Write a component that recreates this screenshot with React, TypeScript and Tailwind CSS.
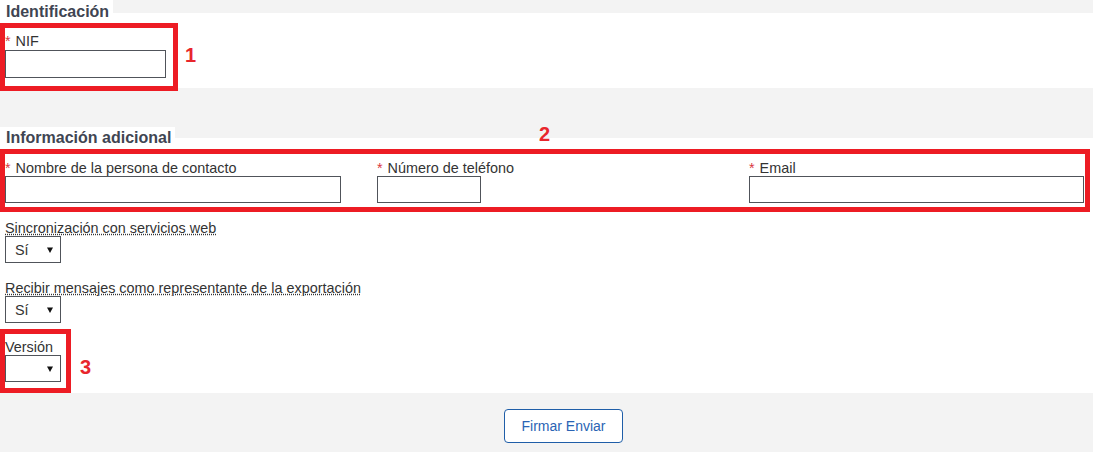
import React from 'react';

const Req: React.FC<{ text: string }> = ({ text }) => (
  <div className="leading-[16px]">
    <span className="text-[#d9363e] pr-[1px]">*</span> {text}
  </div>
);

const FakeSelect: React.FC<{ value?: string }> = ({ value }) => (
  <div className="flex items-center justify-between w-[56px] h-[27px] border border-[#50545a] bg-white pl-[9px] pr-[7px]">
    <span className="leading-[16px]">{value ?? ''}</span>
    <svg width="6" height="6" viewBox="0 0 6 6">
      <path d="M0 0.5 L6 0.5 L3 6 Z" fill="#111" />
    </svg>
  </div>
);

const Marker: React.FC<{ n: string; className: string }> = ({ n, className }) => (
  <div className={`absolute text-[20px] leading-[20px] font-bold text-[#e8262c] ${className}`}>{n}</div>
);

export default function App() {
  return (
    <div className="w-full h-[452px] bg-[#f3f3f3] font-['Liberation_Sans',Arial,sans-serif] text-[14.4px] text-[#333]">
      {/* Identificación */}
      <div className="relative">
        <div className="w-[113px] h-[13px] bg-white">
          <div className="relative z-10 pl-[6px] pt-[3px] text-[16px] leading-[18px] font-bold text-[#404552]">Identificación</div>
        </div>
        <div className="bg-white h-[75px] px-[5px] pt-[20px]">
          <Req text="NIF" />
          <div className="mt-[1px] w-[161px] h-[28px] border border-[#50545a] bg-white" />
        </div>
        <div className="absolute left-0 top-[23px] w-[178px] h-[68px] border-[5px] border-[#ed1c24]" />
        <Marker n="1" className="left-[185px] top-[45px]" />
      </div>

      {/* Información adicional */}
      <div className="relative mt-[39px]">
        <div className="relative z-10 w-[175px] h-[11px] bg-white">
          <div className="pl-[6px] pt-[2px] text-[16px] leading-[18px] font-bold text-[#404552]">Información adicional</div>
        </div>
        <div className="relative bg-white h-[255px] px-[5px] pt-[22px]">
          <div className="grid grid-cols-[336px_336px_336px] gap-x-[36px]">
            <div>
              <Req text="Nombre de la persona de contacto" />
              <div className="w-full h-[27px] border border-[#50545a] bg-white" />
            </div>
            <div>
              <Req text="Número de teléfono" />
              <div className="w-[104px] h-[27px] border border-[#50545a] bg-white" />
            </div>
            <div>
              <Req text="Email" />
              <div className="w-[335px] h-[27px] border border-[#50545a] bg-white" />
            </div>
          </div>

          <div className="mt-[17px] leading-[16px]">
            <span className="underline decoration-dotted">Sincronización con servicios web</span>
          </div>
          <FakeSelect value="Sí" />

          <div className="mt-[17px] leading-[16px]">
            <span className="underline decoration-dotted">Recibir mensajes como representante de la exportación</span>
          </div>
          <FakeSelect value="Sí" />

          <div className="mt-[16px] leading-[16px]">Versión</div>
          <FakeSelect />

          <div className="absolute left-0 top-[11px] w-[1090px] h-[63px] border-[5px] border-[#ed1c24]" />
          <div className="absolute left-0 top-[191px] w-[71px] h-[64px] border-[5px] border-[#ed1c24]" />
          <Marker n="3" className="left-[80px] top-[219px]" />
        </div>
        <Marker n="2" className="left-[539px] top-[-3px]" />
      </div>

      {/* Acciones */}
      <div className="flex justify-center pl-[34px] pt-[16px]">
        <button className="w-[119px] h-[34px] border border-[#1f5ea8] rounded-[4px] bg-white text-[14px] text-[#2a64b4]">
          Firmar Enviar
        </button>
      </div>
    </div>
  );
}
